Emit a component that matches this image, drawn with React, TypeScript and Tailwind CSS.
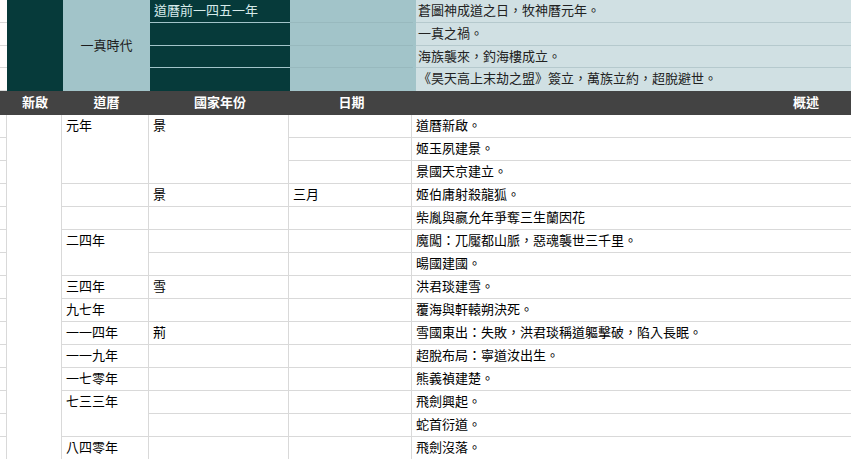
const font = { fontFamily: '"Liberation Sans", "Noto Sans CJK TC", sans-serif' };

type Cell = [string, number];

const daoli: Cell[] = [
  ["元年", 3], ["", 1], ["", 1], ["二四年", 2], ["三四年", 1], ["九七年", 1],
  ["一一四年", 1], ["一一九年", 1], ["一七零年", 1], ["七三三年", 2], ["八四零年", 1],
];
const guo: Cell[] = [
  ["景", 3], ["景", 1], ["", 1], ["", 1], ["", 1], ["雪", 1], ["", 1], ["荊", 1],
  ["", 1], ["", 1], ["", 1], ["", 1], ["", 1],
];
const dates: Cell[] = Array.from({ length: 15 }, (_, i) => [i === 3 ? "三月" : "", 1] as Cell);
const summary: Cell[] = [
  "道曆新啟。", "姬玉夙建景。", "景國天京建立。", "姬伯庸射殺龍狐。", "柴胤與嬴允年爭奪三生蘭因花",
  "魔闖：兀魘都山脈，惡魂襲世三千里。", "暘國建國。", "洪君琰建雪。", "覆海與軒轅朔決死。",
  "雪國東出：失敗，洪君琰稱道軀擊破，陷入長眠。", "超脫布局：寧道汝出生。", "熊義禎建楚。",
  "飛劍興起。", "蛇首衍道。", "飛劍沒落。",
].map((t) => [t, 1] as Cell);

const heights: Record<number, string> = { 1: "h-[23px]", 2: "h-[46px]", 3: "h-[69px]" };

function Column({ cells, width, last }: { cells: Cell[]; width: string; last?: boolean }) {
  return (
    <div className={`flex flex-col ${width} ${last ? "" : "border-r border-[#d9d9d9]"} shrink-0`}>
      {cells.map(([t, span], i) => (
        <div key={i} className={`${heights[span]} border-b border-[#d9d9d9] px-[4px] pt-[3px] leading-[16px] whitespace-nowrap`}>
          {t}
        </div>
      ))}
    </div>
  );
}

const topLines = [
  "蒼圖神成道之日，牧神曆元年。",
  "一真之禍。",
  "海族襲來，釣海樓成立。",
  "《昊天高上末劫之盟》簽立，萬族立約，超脫避世。",
];

export default function App() {
  return (
    <div className="w-[851px] h-[459px] overflow-hidden bg-white text-[13px] text-black" style={font}>
      {/* era block */}
      <div className="flex h-[91px]">
        <div className="w-[7px] flex flex-col">
          {[0, 1, 2, 3].map((i) => (
            <div key={i} className="h-[22.75px] border-b border-[#d9d9d9]" />
          ))}
        </div>
        <div className="w-[56px] bg-[#063a3a]" />
        <div className="w-[87px] bg-[#a2c4c9] flex items-center justify-center text-[#1c1c1c]">一真時代</div>
        <div className="w-[140px] bg-[#063a3a] flex flex-col">
          {["道曆前一四五一年", "", "", ""].map((t, i) => (
            <div key={i} className={`h-[22.75px] px-[4px] leading-[21px] text-[#d6eaea] ${i < 3 ? "border-b border-[#a2c4c9]" : ""}`}>
              {t}
            </div>
          ))}
        </div>
        <div className="w-[123px] bg-[#a2c4c9] flex flex-col">
          {[0, 1, 2, 3].map((i) => (
            <div key={i} className={`h-[22.75px] ${i < 3 ? "border-b border-[#98b9be]" : ""}`} />
          ))}
        </div>
        <div className="w-[3px] bg-[#a2c4c9]" />
        <div className="flex-1 bg-[#d0e0e3] flex flex-col">
          {topLines.map((t, i) => (
            <div key={i} className={`h-[22.75px] px-[2px] leading-[21px] whitespace-nowrap text-[#222] ${i < 3 ? "border-b border-[#b5c9cd]" : ""}`}>
              {t}
            </div>
          ))}
        </div>
      </div>
      {/* header band */}
      <div className="flex h-[24px] bg-[#434343] text-white font-bold items-center">
        <div className="w-[7px]" />
        <div className="w-[56px] text-center">新啟</div>
        <div className="w-[87px] text-center">道曆</div>
        <div className="w-[140px] text-center">國家年份</div>
        <div className="w-[123px] text-center">日期</div>
        <div className="flex-1 text-right pr-[32px]">概述</div>
      </div>
      {/* body */}
      <div className="flex">
        <div className="w-[7px] flex flex-col border-r border-[#d9d9d9]">
          {Array.from({ length: 15 }).map((_, i) => (
            <div key={i} className="h-[23px] border-b border-[#d9d9d9]" />
          ))}
        </div>
        <div className="w-[55px] border-r border-[#d9d9d9] h-[345px]" />
        <Column cells={daoli} width="w-[87px]" />
        <Column cells={guo} width="w-[140px]" />
        <Column cells={dates} width="w-[123px]" />
        <div className="flex-1">
          <Column cells={summary} width="w-full" last />
        </div>
      </div>
    </div>
  );
}
